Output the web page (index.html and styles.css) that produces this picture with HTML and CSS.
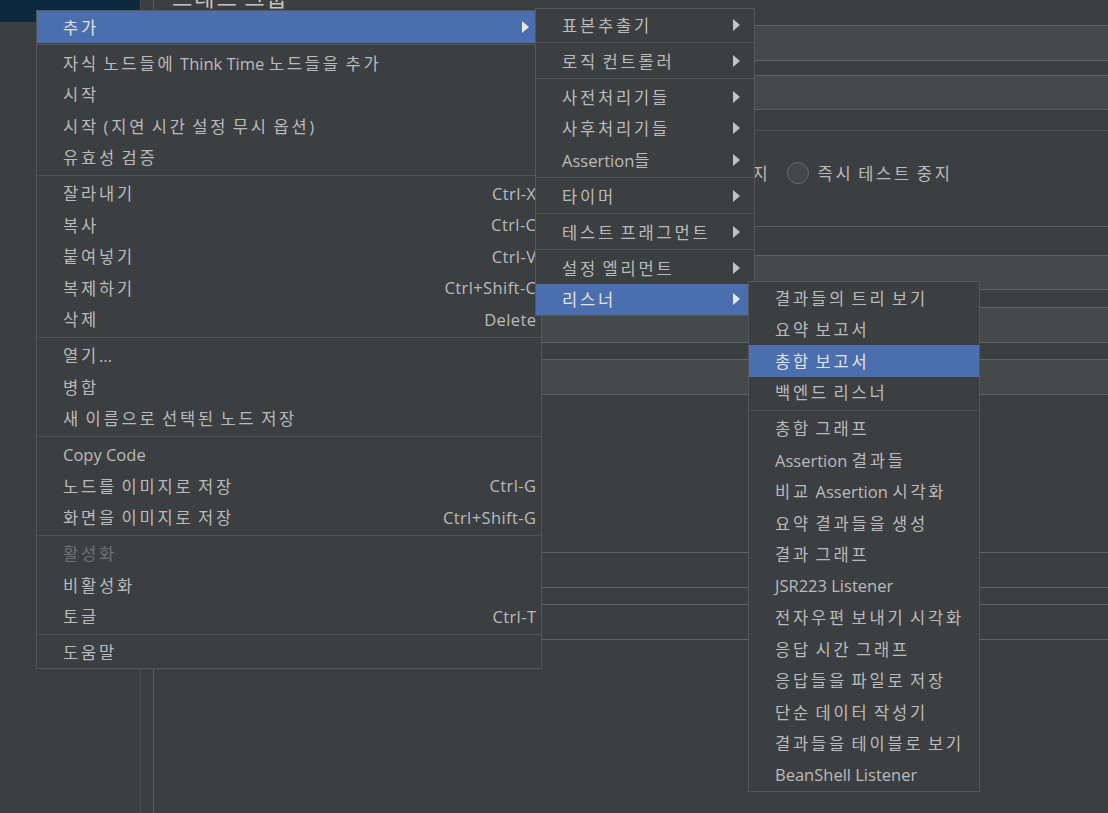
FILE: index.html
```html
<!DOCTYPE html>
<html lang="ko">
<head>
<meta charset="utf-8">
<title>JMeter 메뉴</title>
<link rel="stylesheet" href="styles.css">
</head>
<body>
<div class="app">
  <aside class="tree"><div class="tree-sel"></div></aside>
  <div class="gutter"></div>
  <main class="content">
    <div class="title">스레드 그룹</div>
    <div class="field light fa"></div>
    <div class="field light fb"></div>
    <div class="rule r1"></div>
    <div class="radios">
      <label class="radio"><span class="dot"></span>다음 쓰레드 루프 시작</label>
      <label class="radio"><span class="dot"></span>쓰레드 중지</label>
      <label class="radio"><span class="dot"></span>테스트 중지</label>
      <label class="radio"><span class="dot"></span>즉시 테스트 중지</label>
    </div>
    <div class="rule r2"></div>
    <div class="field light fc"></div>
    <div class="field light fd"></div>
    <div class="field light fe"></div>
    <div class="field ff"></div>
    <div class="field fg"></div>
  </main>
</div>

<div class="menu main-menu">
  <div class="item active"><span>추가</span><svg class="arrow" width="7" height="12" viewBox="0 0 7 12"><path d="M0 0L7 6L0 12Z"/></svg></div>
  <div class="sep"></div>
  <div class="item"><span>자식 노드들에 <span class="en">Think Time</span> 노드들을 추가</span></div>
  <div class="item"><span>시작</span></div>
  <div class="item"><span>시작 (지연 시간 설정 무시 옵션)</span></div>
  <div class="item"><span>유효성 검증</span></div>
  <div class="sep"></div>
  <div class="item"><span>잘라내기</span><span class="key">Ctrl-X</span></div>
  <div class="item"><span>복사</span><span class="key">Ctrl-C</span></div>
  <div class="item"><span>붙여넣기</span><span class="key">Ctrl-V</span></div>
  <div class="item"><span>복제하기</span><span class="key">Ctrl+Shift-C</span></div>
  <div class="item"><span>삭제</span><span class="key">Delete</span></div>
  <div class="sep"></div>
  <div class="item"><span>열기<span class="en">...</span></span></div>
  <div class="item"><span>병합</span></div>
  <div class="item"><span>새 이름으로 선택된 노드 저장</span></div>
  <div class="sep"></div>
  <div class="item"><span class="en">Copy Code</span></div>
  <div class="item"><span>노드를 이미지로 저장</span><span class="key">Ctrl-G</span></div>
  <div class="item"><span>화면을 이미지로 저장</span><span class="key">Ctrl+Shift-G</span></div>
  <div class="sep"></div>
  <div class="item disabled"><span>활성화</span></div>
  <div class="item"><span>비활성화</span></div>
  <div class="item"><span>토글</span><span class="key">Ctrl-T</span></div>
  <div class="sep"></div>
  <div class="item"><span>도움말</span></div>
</div>

<div class="menu sub-add">
  <div class="item"><span>표본추출기</span><svg class="arrow" width="7" height="12" viewBox="0 0 7 12"><path d="M0 0L7 6L0 12Z"/></svg></div>
  <div class="sep"></div>
  <div class="item"><span>로직 컨트롤러</span><svg class="arrow" width="7" height="12" viewBox="0 0 7 12"><path d="M0 0L7 6L0 12Z"/></svg></div>
  <div class="sep"></div>
  <div class="item"><span>사전처리기들</span><svg class="arrow" width="7" height="12" viewBox="0 0 7 12"><path d="M0 0L7 6L0 12Z"/></svg></div>
  <div class="item"><span>사후처리기들</span><svg class="arrow" width="7" height="12" viewBox="0 0 7 12"><path d="M0 0L7 6L0 12Z"/></svg></div>
  <div class="item"><span><span class="en">Assertion</span>들</span><svg class="arrow" width="7" height="12" viewBox="0 0 7 12"><path d="M0 0L7 6L0 12Z"/></svg></div>
  <div class="sep"></div>
  <div class="item"><span>타이머</span><svg class="arrow" width="7" height="12" viewBox="0 0 7 12"><path d="M0 0L7 6L0 12Z"/></svg></div>
  <div class="sep"></div>
  <div class="item"><span>테스트 프래그먼트</span><svg class="arrow" width="7" height="12" viewBox="0 0 7 12"><path d="M0 0L7 6L0 12Z"/></svg></div>
  <div class="sep"></div>
  <div class="item"><span>설정 엘리먼트</span><svg class="arrow" width="7" height="12" viewBox="0 0 7 12"><path d="M0 0L7 6L0 12Z"/></svg></div>
  <div class="item active"><span>리스너</span><svg class="arrow" width="7" height="12" viewBox="0 0 7 12"><path d="M0 0L7 6L0 12Z"/></svg></div>
</div>

<div class="menu sub-listener">
  <div class="item"><span>결과들의 트리 보기</span></div>
  <div class="item"><span>요약 보고서</span></div>
  <div class="item active"><span>총합 보고서</span></div>
  <div class="item"><span>백엔드 리스너</span></div>
  <div class="sep"></div>
  <div class="item"><span>총합 그래프</span></div>
  <div class="item"><span><span class="en">Assertion</span> 결과들</span></div>
  <div class="item"><span>비교 <span class="en">Assertion</span> 시각화</span></div>
  <div class="item"><span>요약 결과들을 생성</span></div>
  <div class="item"><span>결과 그래프</span></div>
  <div class="item"><span class="en">JSR223 Listener</span></div>
  <div class="item"><span>전자우편 보내기 시각화</span></div>
  <div class="item"><span>응답 시간 그래프</span></div>
  <div class="item"><span>응답들을 파일로 저장</span></div>
  <div class="item"><span>단순 데이터 작성기</span></div>
  <div class="item"><span>결과들을 테이블로 보기</span></div>
  <div class="item"><span class="en">BeanShell Listener</span></div>
</div>
</body>
</html>
```

FILE: styles.css
```css
html, body {
  margin: 0;
  padding: 0;
}
body {
  width: 1108px;
  height: 813px;
  overflow: hidden;
  background: #3c3f41;
  color: #bbbbbb;
  font-family: "Open Sans", "Noto Sans CJK KR", sans-serif;
  font-size: 16.5px;
  letter-spacing: 2.8px;
  word-spacing: -2.5px;
  position: relative;
}
.en {
  letter-spacing: 0;
  word-spacing: 0;
}
.key {
  letter-spacing: 0.4px;
  word-spacing: 0;
  margin-right: -0.4px;
}
.app {
  display: flex;
  height: 813px;
}
.tree {
  width: 140px;
  flex: none;
  border-right: 1px solid #4a4d4f;
}
.tree-sel {
  height: 22px;
  background: #0d293e;
}
.gutter {
  width: 12px;
  flex: none;
  border-right: 1px solid #5b5d5f;
}
.content {
  flex: 1;
  display: flex;
  flex-direction: column;
  overflow: hidden;
}
.title {
  height: 22px;
  line-height: 22px;
  margin-top: -15px;
  padding-left: 18px;
  font-size: 22px;
  font-family: "Noto Sans CJK KR", sans-serif;
  letter-spacing: 2px;
  color: #c4c4c4;
  white-space: nowrap;
}
.field {
  margin-left: 240px;
  margin-right: -10px;
  box-sizing: border-box;
  border: 1px solid #5f6263;
  height: 36px;
  flex: none;
}
.field.light {
  background: #45494a;
}
.fa { margin-top: 18px; }
.fb { margin-top: 14px; height: 35px; }
.rule {
  height: 1px;
  flex: none;
  margin-left: 240px;
}
.r1 { margin-top: 20px; background: #505355; }
.radios {
  margin-top: 31px;
  height: 22px;
  display: flex;
  gap: 16px;
  padding-left: 127px;
  white-space: nowrap;
  flex: none;
}
.radio {
  display: flex;
  align-items: center;
  gap: 9px;
}
.dot {
  width: 22px;
  height: 22px;
  box-sizing: border-box;
  border-radius: 50%;
  border: 1.5px solid #666a6b;
  background: #43474a;
  flex: none;
}
.r2 { margin-top: 42px; background: #5a5d5f; }
.fc { margin-top: 28px; height: 35px; }
.fd { margin-top: 17px; }
.fe { margin-top: 16px; }
.ff { margin-top: 157px; }
.fg { margin-top: 16px; }

.menu {
  position: absolute;
  box-sizing: border-box;
  background: #3c3f41;
  border: 1px solid #555759;
}
.main-menu {
  left: 36px;
  top: 10px;
  width: 506px;
}
.sub-add {
  left: 535px;
  top: 8px;
  width: 220px;
}
.sub-listener {
  left: 748px;
  top: 281px;
  width: 232px;
}
.item {
  height: 31.5px;
  display: flex;
  align-items: center;
  justify-content: space-between;
  padding: 0 5px 0 26px;
  white-space: nowrap;
}
.sub-add .item {
  padding-left: 26px;
  padding-right: 14px;
}
.main-menu .item.active {
  padding-right: 12px;
}
.item.active {
  background: #4b6eaf;
  color: #e2e2e2;
}
.item.disabled {
  color: #707070;
}
.arrow {
  fill: #c2c2c2;
  flex: none;
}
.item.active .arrow {
  fill: #e6e6e6;
}
.sep {
  height: 4.5px;
  display: flex;
  align-items: center;
}
.sep::before {
  content: "";
  flex: 1;
  height: 1px;
  background: #515456;
}
```
